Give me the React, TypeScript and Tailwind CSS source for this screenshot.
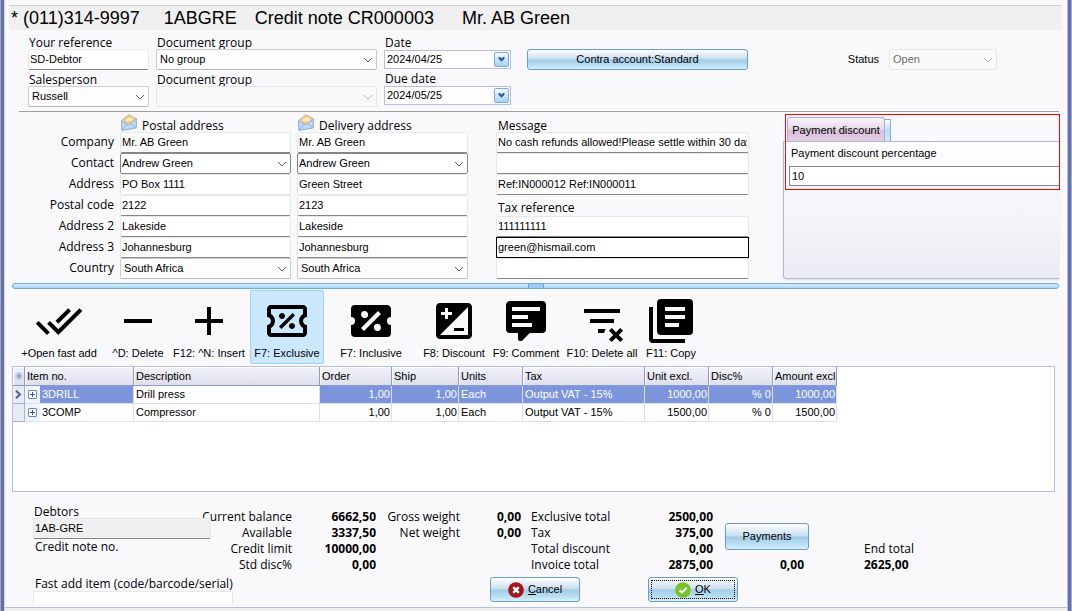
import type { ReactNode } from "react";

const textFont = "font-['Liberation_Sans',Arial,sans-serif] text-[11px]";
const labelClass = "block h-[13px] text-[12px] leading-[13px] whitespace-nowrap text-black";

function Chevron({ faded = false }: { faded?: boolean }) {
  return (
    <svg
      viewBox="0 0 10 6"
      aria-hidden="true"
      className={`pointer-events-none absolute right-1 top-1/2 h-[6px] w-[10px] -translate-y-1/2 ${faded ? "text-[#b8b8b8]" : "text-[#5c5c5c]"}`}
    >
      <path d="M1 1 L5 5 L9 1" fill="none" stroke="currentColor" strokeWidth="1" />
    </svg>
  );
}

type ComboProps = {
  id: string;
  value: string;
  label?: string;
  disabled?: boolean;
  tone?: "light" | "dark";
};

function Combo({ id, value, label, disabled = false, tone = "light" }: ComboProps) {
  const look = disabled
    ? "border-[#e6e6e6] bg-[#fafafa] text-[#6d6d6d] pl-[3px]"
    : tone === "dark"
      ? "border-[#868686] bg-white text-black pl-[1px]"
      : "border-[#cccccc] border-b-[#b8b8b8] bg-[#fdfdfd] text-black pl-[3px]";
  return (
    <div className="relative w-full">
      <select
        id={id}
        aria-label={label}
        disabled={disabled}
        defaultValue={value}
        className={`${textFont} block h-[21px] w-full appearance-none rounded-[2px] border pr-5 leading-[19px] opacity-100 ${look}`}
      >
        <option value={value}>{value}</option>
      </select>
      <Chevron faded={disabled} />
    </div>
  );
}

type FieldProps = { id: string; value?: string; label?: string; look?: string };

function Field({ id, value = "", label, look = "border-[#e8e8e8] border-b-[#868686] bg-white" }: FieldProps) {
  return (
    <input
      id={id}
      type="text"
      aria-label={label}
      defaultValue={value}
      className={`${textFont} block h-[21px] w-full rounded-[2px] border px-[1px] pb-[2px] text-black ${look}`}
    />
  );
}

function DateField({ id, value }: { id: string; value: string }) {
  return (
    <div className="flex h-[19px] w-full items-center border border-[#b9bde0] bg-white">
      <input id={id} type="text" defaultValue={value} className={`${textFont} min-w-0 flex-1 bg-transparent pl-[2px]`} />
      <button
        type="button"
        aria-label="Pick date"
        className="mr-px flex h-[15px] w-[15px] items-center justify-center rounded-[2px] border border-[#7fabdb] bg-linear-to-b from-[#f4faff] to-[#a6d2f3]"
      >
        <svg viewBox="0 0 7 5" className="h-[5px] w-[7px]" aria-hidden="true">
          <path d="M0.5 0 L2 0 L3.5 1.5 L5 0 L6.5 0 L6.5 1.8 L3.5 4.8 L0.5 1.8 Z" fill="#2b5c9e" />
        </svg>
      </button>
    </div>
  );
}

const glossy =
  "rounded-[3px] border border-[#6d9bcb] bg-[linear-gradient(to_bottom,#ffffff_0%,#d8e7f4_35%,#c3dcf0_49%,#a3cbe8_51%,#b9def2_80%,#d6f1fb_100%)] text-black";

function Envelope() {
  return (
    <svg viewBox="0 0 16 17" className="h-[17px] w-4" aria-hidden="true">
      <path d="M0.6 6.5 L7.6 0.8 L15.4 4.6 L15.2 13.8 L1 16.4 Z" fill="#c9dcf6" stroke="#94a6da" strokeWidth="0.8" />
      <path d="M2.8 5.6 Q7.6 -1.6 13.6 3.6 L13.2 8 L8 11 L3 8 Z" fill="#f7cb83" stroke="#e6b070" strokeWidth="0.5" />
      <path d="M5 5.4 Q8 2.6 11.6 4.6 L11.2 6.8 L5.4 7.4 Z" fill="#fdf0cf" />
      <path d="M0.6 6.9 L7.8 11 L15.4 5.2 L15.2 13.8 L1 16.4 Z" fill="#b9dcf9" stroke="#8b9fd6" strokeWidth="0.7" />
      <path d="M1 16.2 L6 10.2 M15 13.8 L9.8 9.8" stroke="#8fa8de" strokeWidth="0.8" />
    </svg>
  );
}

const icons = {
  doneAll:
    "M18 7l-1.41-1.41-6.34 6.34 1.41 1.41L18 7zm4.24-1.41L11.66 16.17 7.48 12l-1.41 1.41L11.66 19l12-12-1.42-1.41zM.41 13.41L6 19l1.41-1.41L1.83 12 .41 13.41z",
  minus: "M5 11H19V13H5Z",
  plus: "M19 13H13V19H11V13H5V11H11V5H13V11H19Z",
  ticketOutline:
    "M14.8 8L16 9.2L9.2 16L8 14.8L14.8 8M4 4H20C21.11 4 22 4.89 22 6V10C20.9 10 20 10.9 20 12C20 13.1 20.9 14 22 14V18C22 19.11 21.11 20 20 20H4C2.9 20 2 19.11 2 18V14C3.1 14 4 13.1 4 12C4 10.9 3.11 10 2 10V6C2 4.9 2.9 4 4 4M4 6V8.54C5.24 9.26 6 10.57 6 12C6 13.43 5.24 14.75 4 15.46V18H20V15.46C18.76 14.75 18 13.43 18 12C18 10.57 18.76 9.26 20 8.54V6H4M9.5 8C10.33 8 11 8.67 11 9.5C11 10.33 10.33 11 9.5 11C8.67 11 8 10.33 8 9.5C8 8.67 8.67 8 9.5 8M14.5 13C15.33 13 16 13.67 16 14.5C16 15.33 15.33 16 14.5 16C13.67 16 13 15.33 13 14.5C13 13.67 13.67 13 14.5 13Z",
  ticket:
    "M4,4A2,2 0 0,0 2,6V10A2,2 0 0,1 4,12A2,2 0 0,1 2,14V18A2,2 0 0,0 4,20H20A2,2 0 0,0 22,18V14A2,2 0 0,1 20,12A2,2 0 0,1 22,10V6C22,4.89 21.1,4 20,4H4M15.5,7L17,8.5L8.5,17L7,15.5L15.5,7M8.81,7.04C9.79,7.04 10.58,7.83 10.58,8.81A1.77,1.77 0 0,1 8.81,10.58C7.83,10.58 7.04,9.79 7.04,8.81A1.77,1.77 0 0,1 8.81,7.04M15.19,13.42C16.17,13.42 16.96,14.21 16.96,15.19A1.77,1.77 0 0,1 15.19,16.96C14.21,16.96 13.42,16.17 13.42,15.19A1.77,1.77 0 0,1 15.19,13.42Z",
  discount:
    "M19 3H5c-1.1 0-2 .9-2 2v14c0 1.1.9 2 2 2h14c1.1 0 2-.9 2-2V5c0-1.1-.9-2-2-2zM5.5 7.5h2v-2H9v2h2V9H9v2H7.5V9h-2V7.5zM19 19H5L19 5v14zm-2-2v-1.5h-5V17h5z",
  comment:
    "M9,22A1,1 0 0,1 8,21V18H4A2,2 0 0,1 2,16V4C2,2.89 2.9,2 4,2H20A2,2 0 0,1 22,4V16A2,2 0 0,1 20,18H13.9L10.2,21.71C10,21.9 9.75,22 9.5,22H9M5,5V7H19V5H5M5,9V11H13V9H5M5,13V15H15V13H5Z",
  deleteAll:
    "M21 8H3V6H21V8M13.81 16H10V18H13.09C13.21 17.28 13.46 16.61 13.81 16M18 11H6V13H18V11M21.12 15.46L19 17.59L16.88 15.46L15.47 16.88L17.59 19L15.47 21.12L16.88 22.54L19 20.41L21.12 22.54L22.54 21.12L20.41 19L22.54 16.88L21.12 15.46Z",
  copy:
    "M3 5H1V21A2 2 0 0 0 3 23H19V21H3V5ZM7 1H21A2 2 0 0 1 23 3V17A2 2 0 0 1 21 19H7A2 2 0 0 1 5 17V3A2 2 0 0 1 7 1ZM9 5V7H19V5ZM9 9V11H19V9ZM9 13V15H16V13Z",
};

const tools: { text: string; icon: keyof typeof icons; box: string; active?: boolean }[] = [
  { text: "+Open fast add", icon: "doneAll", box: "w-[82px]" },
  { text: "^D: Delete", icon: "minus", box: "ml-1 w-[68px]" },
  { text: "F12: ^N: Insert", icon: "plus", box: "w-[74px]" },
  { text: "F7: Exclusive", icon: "ticketOutline", box: "ml-1 w-[74px]", active: true },
  { text: "F7: Inclusive", icon: "ticket", box: "ml-[10px] w-[74px]" },
  { text: "F8: Discount", icon: "discount", box: "ml-[9px] w-[74px]" },
  { text: "F9: Comment", icon: "comment", box: "w-[70px]" },
  { text: "F10: Delete all", icon: "deleteAll", box: "ml-1 w-[74px]" },
  { text: "F11: Copy", icon: "copy", box: "w-[64px]" },
];

const addressRows = [
  { label: "Company", postal: "Mr. AB Green", delivery: "Mr. AB Green", kind: "text" },
  { label: "Contact", postal: "Andrew Green", delivery: "Andrew Green", kind: "dark" },
  { label: "Address", postal: "PO Box 1111", delivery: "Green Street", kind: "soft" },
  { label: "Postal code", postal: "2122", delivery: "2123", kind: "text" },
  { label: "Address 2", postal: "Lakeside", delivery: "Lakeside", kind: "text" },
  { label: "Address 3", postal: "Johannesburg", delivery: "Johannesburg", kind: "text" },
  { label: "Country", postal: "South Africa", delivery: "South Africa", kind: "light" },
];

function AddressColumn({ side, title }: { side: "postal" | "delivery"; title: string }) {
  return (
    <div className="w-[171px]">
      <div className="flex h-5 items-end gap-[5px] pl-px">
        <div className="h-[18px]">
          <Envelope />
        </div>
        <span className="text-[12px] leading-[12px]">{title}</span>
      </div>
      {addressRows.map((row) => {
        const id = `${side}-${row.label}`;
        const name = side === "delivery" ? `Delivery ${row.label}` : undefined;
        if (row.kind === "dark" || row.kind === "light") {
          return <Combo key={id} id={id} value={row[side]} label={name} tone={row.kind} />;
        }
        return (
          <Field
            key={id}
            id={id}
            value={row[side]}
            label={name}
            look={row.kind === "soft" ? "border-[#e8e8e8] bg-white" : undefined}
          />
        );
      })}
    </div>
  );
}

const columns = [
  { title: "Description", width: "w-[186px]" },
  { title: "Order", width: "w-[72px]" },
  { title: "Ship", width: "w-[67px]" },
  { title: "Units", width: "w-[64px]" },
  { title: "Tax", width: "w-[122px]" },
  { title: "Unit excl.", width: "w-[64px]" },
  { title: "Disc%", width: "w-[64px]" },
  { title: "Amount excl", width: "w-[64px]" },
];

const items = [
  { code: "3DRILL", cells: ["Drill press", "1,00", "1,00", "Each", "Output VAT - 15%", "1000,00", "% 0", "1000,00"] },
  { code: "3COMP", cells: ["Compressor", "1,00", "1,00", "Each", "Output VAT - 15%", "1500,00", "% 0", "1500,00"] },
];
const numeric = [1, 2, 5, 6, 7];

const headCell =
  "h-[19px] border-r border-b border-[#8f9acb] bg-linear-to-b from-[#f3f4f9] to-[#dcdfec] px-[2px] text-left font-normal shadow-[inset_1px_1px_0_#ffffff] whitespace-nowrap";

function ItemTable() {
  return (
    <div className="ml-[7px] mr-3 min-h-[126px] flex-1 border border-[#b8bedf] bg-white">
      <table className={`${textFont} w-[824px] table-fixed border-separate border-spacing-0 leading-[17px]`}>
        <colgroup>
          <col className="w-3" />
          <col className="w-[15px]" />
          <col className="w-[94px]" />
          {columns.map((c) => (
            <col key={c.title} className={c.width} />
          ))}
        </colgroup>
        <thead>
          <tr>
            <th scope="col" className={headCell}>
              <svg viewBox="0 0 8 8" className="h-2 w-2" aria-label="Row marker">
                <path d="M4 0V8M0 4H8M1.2 1.2L6.8 6.8M6.8 1.2L1.2 6.8" stroke="#8290c8" strokeWidth="0.9" />
              </svg>
            </th>
            <th scope="col" colSpan={2} className={headCell}>
              Item no.
            </th>
            {columns.map((c) => (
              <th key={c.title} scope="col" className={headCell}>
                {c.title}
              </th>
            ))}
          </tr>
        </thead>
        <tbody>
          {items.map((item, row) => {
            const active = row === 0;
            const tone = active ? "bg-[#7c95dd] text-white" : "bg-white";
            return (
              <tr key={item.code}>
                <td className="h-[18px] border-r border-b border-[#a9b1d8] bg-[#e9ebf4] pl-[2px]">
                  {active && (
                    <svg viewBox="0 0 7 9" className="h-[9px] w-[7px]" aria-hidden="true">
                      <path d="M1 0.8 L5 4.5 L1 8.2" fill="none" stroke="#4c5ea8" strokeWidth="2" />
                    </svg>
                  )}
                </td>
                <td className="border-b border-[#dcdcf4] bg-[#eef5fd] pl-[3px]">
                  <button
                    type="button"
                    aria-label={`Expand ${item.code}`}
                    className="flex h-[9px] w-[9px] items-center justify-center rounded-[1px] border border-[#7583c2] bg-white"
                  >
                    <svg viewBox="0 0 5 5" className="h-[5px] w-[5px]" aria-hidden="true">
                      <path d="M2.5 0V5M0 2.5H5" stroke="#3f4f9a" strokeWidth="1" />
                    </svg>
                  </button>
                </td>
                <td className={`border-r border-b border-[#dcdcf4] px-[2px] ${tone}`}>{item.code}</td>
                {item.cells.map((cell, i) => (
                  <td
                    key={columns[i].title}
                    className={`border-r border-b border-[#dcdcf4] whitespace-nowrap ${numeric.includes(i) ? "pr-px text-right" : "pl-[2px] text-left"} ${active && i > 0 ? "bg-[#7c95dd] text-white" : "bg-white"}`}
                  >
                    {cell}
                  </td>
                ))}
              </tr>
            );
          })}
        </tbody>
      </table>
    </div>
  );
}

function Lines({ items: lines, box }: { items: ReactNode[]; box: string }) {
  return (
    <div className={`flex flex-col pt-[17px] text-[12px] whitespace-nowrap ${box}`}>
      {lines.map((line, i) => (
        <span key={i} className="h-4 leading-4">
          {line}
        </span>
      ))}
    </div>
  );
}

export default function App() {
  return (
    <div className="flex min-h-screen bg-[#f0f0f0] font-['Open_Sans','Noto_Sans',sans-serif] text-black">
      <div className="w-[5px] shrink-0 border-r border-l border-r-[#cfd2ec] border-l-[#a9a9b4] bg-[#6370ad]" />
      <main className="mb-[3px] flex min-w-0 flex-1 flex-col border-b border-[#b8bedf] bg-[#f9f9fc] pt-[5px]">
        <h1 className="ml-1 mr-[5px] flex h-[25px] items-center border-t border-[#d2d2d2] bg-[#f0f0f0] pt-px pl-[2px] font-['Liberation_Sans',Arial,sans-serif] text-[18px] whitespace-nowrap">
          <span className="pr-6">* (011)314-9997</span>
          <span className="pr-[18px]">1ABGRE</span>
          <span className="pr-7">Credit note CR000003</span>
          <span>Mr. AB Green</span>
        </h1>

        <section className="flex gap-[7px] pt-[6px] pl-[23px]">
          <div className="w-[121px]">
            <label htmlFor="your-ref" className={`${labelClass} pl-px`}>
              Your reference
            </label>
            <Field id="your-ref" value="SD-Debtor" />
            <label htmlFor="salesperson" className={`${labelClass} mt-[3px] pl-px`}>
              Salesperson
            </label>
            <Combo id="salesperson" value="Russell" />
          </div>
          <div className="w-[221px]">
            <label htmlFor="group-1" className={`${labelClass} pl-px`}>
              Document group
            </label>
            <Combo id="group-1" value="No group" />
            <label htmlFor="group-2" className={`${labelClass} mt-[3px] pl-px`}>
              Document group
            </label>
            <Combo id="group-2" value="" disabled />
          </div>
          <div className="w-[127px]">
            <label htmlFor="date" className={`${labelClass} mb-px pl-px`}>
              Date
            </label>
            <DateField id="date" value="2024/04/25" />
            <label htmlFor="due" className={`${labelClass} mt-[3px] mb-px pl-px`}>
              Due date
            </label>
            <DateField id="due" value="2024/05/25" />
          </div>
          <button type="button" className={`${textFont} ${glossy} mt-[13px] ml-[9px] h-[21px] w-[221px]`}>
            Contra account:Standard
          </button>
          <div className="mt-[13px] mr-[70px] ml-auto flex h-[21px] items-center gap-[10px]">
            <label htmlFor="status" className={textFont}>
              Status
            </label>
            <div className="w-[108px]">
              <Combo id="status" value="Open" disabled />
            </div>
          </div>
        </section>

        <hr className="mt-1 mr-2 ml-[14px] border-t border-[#a0a0a0]" />

        <section className="flex">
          <div className="w-[109px] pt-5 text-right text-[12px]">
            {addressRows.map((row) => (
              <label key={row.label} htmlFor={`postal-${row.label}`} className="block h-[21px] leading-[20px]">
                {row.label}
              </label>
            ))}
          </div>
          <div className="ml-[6px] flex gap-[6px]">
            <AddressColumn side="postal" title="Postal address" />
            <AddressColumn side="delivery" title="Delivery address" />
          </div>
          <div className="ml-7 w-[253px]">
            <label htmlFor="message-1" className="flex h-5 items-end pl-[2px] text-[12px] leading-[12px]">
              Message
            </label>
            <Field id="message-1" value="No cash refunds allowed!Please settle within 30 days" />
            <Field id="message-2" label="Message line 2" />
            <Field id="message-3" label="Message line 3" value="Ref:IN000012 Ref:IN000011" />
            <label htmlFor="tax-ref" className="flex h-[21px] items-end pb-[2px] pl-[2px] text-[12px] leading-[13px]">
              Tax reference
            </label>
            <Field id="tax-ref" value="111111111" />
            <Field id="email" label="Email" value="green@hismail.com" look="rounded-none border-black bg-white" />
            <Field id="extra" label="Additional reference" />
          </div>
          <div className="relative mr-2 ml-[34px] flex min-w-0 flex-1 flex-col pt-[5px]">
            <div className="flex h-6 items-end pl-1" role="tablist">
              <button
                type="button"
                role="tab"
                aria-selected="true"
                className={`${textFont} h-6 w-[98px] rounded-t-[3px] border border-b-0 border-[#b9a6c8] bg-[linear-gradient(to_bottom,#f8f3f9_0%,#e9dbeb_45%,#d9bfdb_55%,#e3cfe3_100%)] pt-[2px]`}
              >
                Payment discount
              </button>
              <div className="h-[22px] w-[6px] border-t border-r border-[#7fb0dd] bg-linear-to-b from-white via-[#b5dcf6] to-[#d3ebfa]" />
            </div>
            <div className="flex-1 rounded-bl-[3px] border border-r-0 border-[#b6b8da] bg-linear-to-b from-white to-[#ebecf4] pl-[5px] shadow-[0_1px_2px_rgba(0,0,0,0.12)]">
              <label htmlFor="discount" className={`${textFont} block h-6 pl-[2px] leading-[23px]`}>
                Payment discount percentage
              </label>
              <input
                id="discount"
                type="text"
                defaultValue="10"
                className={`${textFont} block h-5 w-full border border-r-0 border-[#868686] bg-white px-[2px] pb-px`}
              />
            </div>
            <div className="pointer-events-none absolute top-[2px] right-[-1px] left-[2px] h-[76px] border border-[#ff0000]" />
          </div>
        </section>

        <div className="mt-1 mr-2 ml-[7px] flex h-[6px] justify-center rounded-[3px] border border-[#6fabe0] bg-linear-to-b from-[#d9eefc] to-[#a9d5f6]">
          <div className="w-4 border-x border-[#5fa5e0] bg-[#9bcef6]" />
        </div>

        <nav aria-label="Line tools" className="mt-px mb-[2px] flex h-[74px] pl-[13px]">
          {tools.map((tool) => (
            <button
              key={tool.text}
              type="button"
              className={`${textFont} ${tool.box} flex flex-col items-center rounded-[2px] border pt-[6px] whitespace-nowrap ${tool.active ? "border-[#99d1ff] bg-[#cce8ff]" : "border-transparent"}`}
            >
              <svg viewBox="0 0 24 24" className="h-12 w-12 shrink-0" fill="currentColor" fillRule="evenodd" aria-hidden="true">
                <path d={icons[tool.icon]} />
              </svg>
              <span className="leading-4">{tool.text}</span>
            </button>
          ))}
        </nav>

        <ItemTable />

        <footer className="flex h-[115px] pl-7">
          <div className="z-10 w-[178px] pt-[13px]">
            <label htmlFor="debtor" className={`${labelClass} pl-px`}>
              Debtors
            </label>
            <Field id="debtor" value="1AB-GRE" look="border-[#e8e8e8] border-b-[#868686] bg-[#f0f0f0]" />
            <p className={`${labelClass} mt-px pl-[2px]`}>Credit note no.</p>
            <label htmlFor="fast-add" className={`${labelClass} mt-6 mb-px pl-[2px]`}>
              Fast add item (code/barcode/serial)
            </label>
            <input id="fast-add" type="text" className={`${textFont} block h-[13px] w-[200px] border border-b-0 border-[#e8e8e8] bg-white px-[2px]`} />
          </div>
          <div className="flex-1">
            <div className="flex h-[85px]">
              <Lines box="w-[81px] items-end" items={["Current balance", "Available", "Credit limit", "Std disc%"]} />
              <Lines box="w-[84px] items-end font-bold" items={["6662,50", "3337,50", "10000,00", "0,00"]} />
              <Lines box="w-[84px] items-end" items={["Gross weight", "Net weight"]} />
              <Lines box="w-[61px] items-end font-bold" items={["0,00", "0,00"]} />
              <Lines box="ml-[10px] w-[91px] items-start" items={["Exclusive total", "Tax", "Total discount", "Invoice total"]} />
              <Lines box="w-[91px] items-end font-bold" items={["2500,00", "375,00", "0,00", "2875,00"]} />
              <div className="ml-3 w-[84px] pt-[31px] text-right">
                <button type="button" className={`${textFont} ${glossy} block h-[27px] w-full`}>
                  Payments
                </button>
                <p className="mt-[7px] pr-[5px] text-[12px] leading-4 font-bold">0,00</p>
              </div>
              <div className="ml-[55px] pt-[49px] text-[12px] leading-4 whitespace-nowrap">
                <p>End total</p>
                <p className="font-bold">2625,00</p>
              </div>
            </div>
            <div className="flex gap-[68px] pl-[279px]">
              <button type="button" className={`${textFont} ${glossy} flex h-[25px] w-[90px] items-center justify-center gap-1`}>
                <svg viewBox="0 0 16 16" className="h-4 w-4" aria-hidden="true">
                  <circle cx="8" cy="8" r="7.8" fill="#a3161c" />
                  <path d="M5.2 5.2L10.8 10.8M10.8 5.2L5.2 10.8" stroke="#ffffff" strokeWidth="2.4" />
                </svg>
                <span>
                  <u>C</u>ancel
                </span>
              </button>
              <button type="button" className={`${glossy} h-[25px] w-[90px] p-[2px]`}>
                <span className={`${textFont} flex h-full items-center justify-center gap-1 border border-dotted border-black`}>
                  <svg viewBox="0 0 16 16" className="h-4 w-4" aria-hidden="true">
                    <circle cx="8" cy="8" r="7.8" fill="#78c126" />
                    <path d="M4.4 8.2L7 10.7L11.6 5.8" fill="none" stroke="#ffffff" strokeWidth="2" />
                  </svg>
                  <span>
                    <u>O</u>K
                  </span>
                </span>
              </button>
            </div>
          </div>
        </footer>
      </main>
      <div className="w-[5px] shrink-0 border-r border-l border-r-[#a9a9c8] border-l-[#b9bde0] bg-[#6370ad]" />
    </div>
  );
}
